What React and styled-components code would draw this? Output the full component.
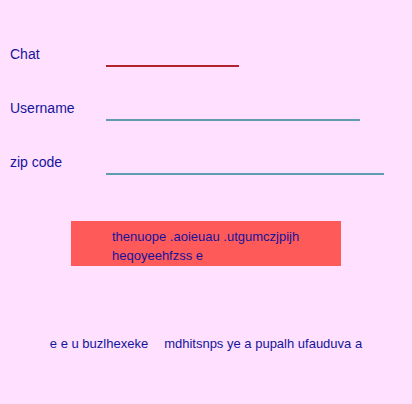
import React from "react";
import styled, { createGlobalStyle } from "styled-components";

const GlobalStyle = createGlobalStyle`
  *, *::before, *::after { box-sizing: border-box; }
  body {
    margin: 0;
    background: #ffe0ff;
    color: #14149b;
    font-family: "Liberation Sans", Arial, sans-serif;
    font-size: 14px;
  }
`;

const Form = styled.form`
  padding: 40px 28px 40px 10px;
`;

const Field = styled.div`
  display: grid;
  grid-template-columns: 96px 1fr;
  height: 54px;
  align-items: start;
`;

const Label = styled.label`
  line-height: 28px;
`;

const Input = styled.input`
  width: ${(p) => p.$width};
  height: 27px;
  padding: 0 2px;
  border: 0;
  border-bottom: 2px solid ${(p) => (p.$invalid ? "#b22230" : "#5f9cb0")};
  border-radius: 0;
  background: transparent;
  color: inherit;
  font: inherit;
  outline: none;
`;

const Actions = styled.div`
  display: flex;
  justify-content: center;
  margin: 19px -28px 0 -10px;
`;

const Submit = styled.button`
  width: 270px;
  padding: 6px 41px 1px;
  border: 0;
  background: #ff5a5a;
  color: inherit;
  font: inherit;
  font-size: 13px;
  line-height: 19px;
  text-align: left;
`;

const Links = styled.nav`
  display: flex;
  justify-content: center;
  gap: 16px;
  margin: 68px -28px 0 -10px;
`;

const TextLink = styled.a`
  color: inherit;
  font-size: 13px;
  line-height: 20px;
  text-decoration: none;
  white-space: nowrap;
`;

const fields = [
  { id: "chat", label: "Chat", width: "48%", invalid: true },
  { id: "username", label: "Username", width: "91.5%" },
  { id: "zip", label: "zip code", width: "100%" },
];

export default function App() {
  return (
    <>
      <GlobalStyle />
      <Form onSubmit={(e) => e.preventDefault()}>
        {fields.map((f) => (
          <Field key={f.id}>
            <Label htmlFor={f.id}>{f.label}</Label>
            <Input id={f.id} type="text" $width={f.width} $invalid={f.invalid} />
          </Field>
        ))}
        <Actions>
          <Submit type="submit">thenuope .aoieuau .utgumczjpijh heqoyeehfzss e</Submit>
        </Actions>
        <Links>
          <TextLink href="#first">e e u buzlhexeke</TextLink>
          <TextLink href="#second">mdhitsnps ye a pupalh ufauduva a</TextLink>
        </Links>
      </Form>
    </>
  );
}
